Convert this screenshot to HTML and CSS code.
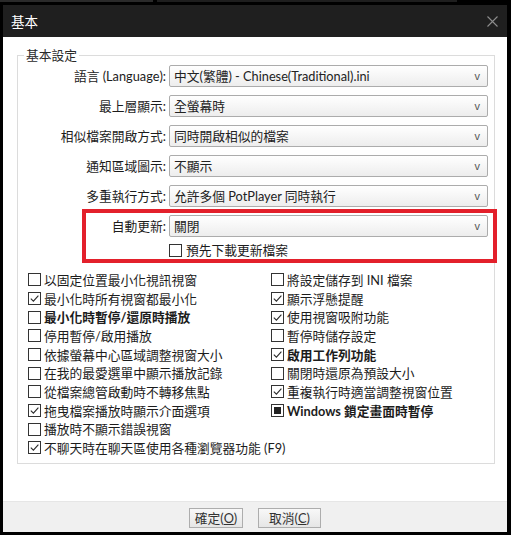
FILE: index.html
```html
<!DOCTYPE html>
<html lang="zh-Hant">
<head>
<meta charset="utf-8">
<title>基本</title>
<link rel="stylesheet" href="styles.css">
</head>
<body>
<div class="topstrip"><span class="ts-a"></span><span class="ts-b"></span></div>
<div class="dialog">
  <div class="titlebar">
    <span class="title">基本</span>
    <svg class="close" width="11" height="11" viewBox="0 0 11 11"><path d="M0.5 0.5 L10.5 10.5 M10.5 0.5 L0.5 10.5" stroke="#8d8d8d" stroke-width="1.1" fill="none"/></svg>
  </div>
  <div class="client">
    <fieldset class="group">
      <legend class="legend">基本設定</legend>
      <div class="form-row"><span class="lbl">語言 (Language):</span><div class="combo"><span class="val">中文(繁體) - Chinese(Traditional).ini</span><span class="arrow">v</span></div></div>
      <div class="form-row"><span class="lbl">最上層顯示:</span><div class="combo"><span class="val">全螢幕時</span><span class="arrow">v</span></div></div>
      <div class="form-row"><span class="lbl">相似檔案開啟方式:</span><div class="combo"><span class="val">同時開啟相似的檔案</span><span class="arrow">v</span></div></div>
      <div class="form-row"><span class="lbl">通知區域圖示:</span><div class="combo"><span class="val">不顯示</span><span class="arrow">v</span></div></div>
      <div class="form-row"><span class="lbl">多重執行方式:</span><div class="combo"><span class="val">允許多個 PotPlayer 同時執行</span><span class="arrow">v</span></div></div>
      <div class="form-row last"><span class="lbl">自動更新:</span><div class="combo"><span class="val">關閉</span><span class="arrow">v</span></div></div>
      <div class="sub-check chk"><span class="box"></span><span>預先下載更新檔案</span></div>
      <div class="checks">
        <div class="col col-left">
          <div class="chk"><span class="box"></span><span>以固定位置最小化視訊視窗</span></div>
          <div class="chk"><span class="box"><svg viewBox="0 0 11 11"><path d="M1.8 5.6 L4.4 8.2 L9.4 2.6"/></svg></span><span>最小化時所有視窗都最小化</span></div>
          <div class="chk bold"><span class="box"></span><span>最小化時暫停/還原時播放</span></div>
          <div class="chk"><span class="box"></span><span>停用暫停/啟用播放</span></div>
          <div class="chk"><span class="box"></span><span>依據螢幕中心區域調整視窗大小</span></div>
          <div class="chk"><span class="box"></span><span>在我的最愛選單中顯示播放記錄</span></div>
          <div class="chk"><span class="box"></span><span>從檔案總管啟動時不轉移焦點</span></div>
          <div class="chk"><span class="box"><svg viewBox="0 0 11 11"><path d="M1.8 5.6 L4.4 8.2 L9.4 2.6"/></svg></span><span>拖曳檔案播放時顯示介面選項</span></div>
          <div class="chk"><span class="box"></span><span>播放時不顯示錯誤視窗</span></div>
          <div class="chk wide"><span class="box"><svg viewBox="0 0 11 11"><path d="M1.8 5.6 L4.4 8.2 L9.4 2.6"/></svg></span><span>不聊天時在聊天區使用各種瀏覽器功能 (F9)</span></div>
        </div>
        <div class="col col-right">
          <div class="chk"><span class="box"></span><span>將設定儲存到 INI 檔案</span></div>
          <div class="chk"><span class="box"><svg viewBox="0 0 11 11"><path d="M1.8 5.6 L4.4 8.2 L9.4 2.6"/></svg></span><span>顯示浮懸提醒</span></div>
          <div class="chk"><span class="box"><svg viewBox="0 0 11 11"><path d="M1.8 5.6 L4.4 8.2 L9.4 2.6"/></svg></span><span>使用視窗吸附功能</span></div>
          <div class="chk"><span class="box"></span><span>暫停時儲存設定</span></div>
          <div class="chk bold"><span class="box"><svg viewBox="0 0 11 11"><path d="M1.8 5.6 L4.4 8.2 L9.4 2.6"/></svg></span><span>啟用工作列功能</span></div>
          <div class="chk"><span class="box"></span><span>關閉時還原為預設大小</span></div>
          <div class="chk"><span class="box"><svg viewBox="0 0 11 11"><path d="M1.8 5.6 L4.4 8.2 L9.4 2.6"/></svg></span><span>重複執行時適當調整視窗位置</span></div>
          <div class="chk bold"><span class="box indet"><span class="fill"></span></span><span>Windows 鎖定畫面時暫停</span></div>
        </div>
      </div>
    </fieldset>
    <div class="highlight"></div>
  </div>
  <div class="footer">
    <button class="btn btn-ok">確定(<u>O</u>)</button>
    <button class="btn btn-cancel">取消(<u>C</u>)</button>
  </div>
</div>
</body>
</html>
```
FILE: styles.css
```css
html, body {
  margin: 0;
  padding: 0;
  background: #000;
}
body {
  font-family: "Lato", "Noto Sans CJK TC", sans-serif;
  font-size: 12.75px;
  color: #1c1c1c;
  width: 511px;
  height: 535px;
  overflow: hidden;
}
.topstrip {
  height: 5px;
  display: flex;
  align-items: flex-start;
}
.ts-a {
  width: 153px;
  height: 2px;
  background: #2a2a2a;
}
.ts-b {
  width: 300px;
  height: 2px;
  margin-left: 4px;
  background: #1e1e1e;
}
.dialog {
  margin-left: 3px;
  width: 504px;
  height: 527px;
  background: #fff;
  display: flex;
  flex-direction: column;
}
.titlebar {
  height: 32px;
  flex: none;
  background: #1f1f1f;
  display: flex;
  align-items: center;
  justify-content: space-between;
  padding: 0 9px 0 8px;
}
.title {
  color: #fff;
  font-size: 13.5px;
  line-height: 16px;
  font-family: "Noto Sans CJK TC", sans-serif;
}
.close {
  display: block;
}
.client {
  position: relative;
  flex: 1;
  padding: 10px 12px 0 14px;
}
.group {
  margin: 0;
  padding: 2px 0 6px 0;
  border: 1px solid #dcdcdc;
  min-width: 0;
}
.legend {
  margin-left: 6px;
  padding: 0 2px;
  line-height: 16px;
  color: #2a2a2a;
  font-family: "Noto Sans CJK TC", sans-serif;
}
.form-row {
  display: flex;
  align-items: center;
  height: 22px;
  margin-bottom: 8px;
}
.form-row.last {
  margin-bottom: 4px;
}
.lbl {
  width: 148px;
  text-align: right;
  margin-right: 3px;
  white-space: nowrap;
  line-height: 16px;
}
.combo {
  width: 319px;
  height: 22px;
  box-sizing: border-box;
  border: 1px solid #acacac;
  border-radius: 2px;
  background: linear-gradient(#ffffff, #ededed);
  display: flex;
  align-items: center;
  justify-content: space-between;
  padding: 0 7px 0 4px;
}
.val {
  line-height: 16px;
  color: #222;
  white-space: nowrap;
}
.arrow {
  font-family: "Liberation Sans", sans-serif;
  font-size: 11px;
  color: #555;
}
.chk {
  display: flex;
  align-items: center;
  height: 18.67px;
  white-space: nowrap;
  line-height: 16px;
}
.chk .box {
  flex: none;
  width: 13px;
  height: 13px;
  box-sizing: border-box;
  border: 1px solid #333;
  background: #fff;
  margin-right: 3px;
  display: flex;
  align-items: center;
  justify-content: center;
}
.chk .box svg {
  width: 11px;
  height: 11px;
  display: block;
}
.chk .box svg path {
  fill: none;
  stroke: #2a2a2a;
  stroke-width: 1.1;
}
.chk .box .fill {
  width: 7px;
  height: 7px;
  background: #222;
}
.bold {
  font-weight: bold;
}
.sub-check {
  margin-left: 151px;
  margin-bottom: 11px;
}
.sub-check .box {
  margin-right: 4px;
}
.checks {
  display: flex;
}
.col-left {
  width: 243px;
  padding-left: 10px;
}
.col-right {
  flex: 1;
}
.highlight {
  position: absolute;
  left: 79px;
  top: 172px;
  width: 415px;
  height: 54px;
  box-sizing: border-box;
  border: 4px solid #e3202b;
}
.footer {
  height: 31px;
  flex: none;
  box-sizing: border-box;
  background: #f0f0f0;
  border-top: 1px solid #e6e6e6;
  display: flex;
  justify-content: center;
  align-items: flex-start;
  gap: 15px;
  padding-top: 6px;
}
.btn {
  height: 20px;
  box-sizing: border-box;
  border: 1px solid #adadad;
  background: linear-gradient(#f8f8f8, #e6e6e6);
  font-family: "Lato", "Noto Sans CJK TC", sans-serif;
  font-size: 12.75px;
  line-height: 16px;
  color: #333;
  padding: 0;
  margin: 0;
}
.btn-ok {
  width: 54px;
}
.btn-cancel {
  width: 63px;
}
```
